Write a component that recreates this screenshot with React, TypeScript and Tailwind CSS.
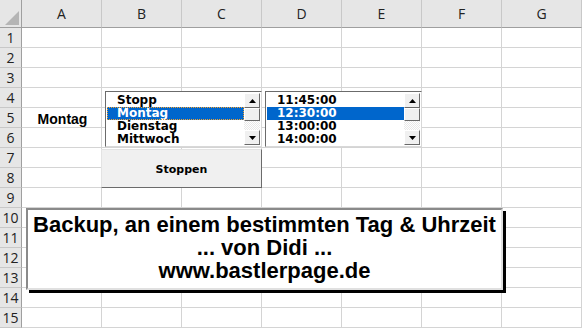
const cols = ["A", "B", "C", "D", "E", "F", "G"];
const rows = Array.from({ length: 15 }, (_, i) => i + 1);

const ScrollBar = () => (
  <div className="flex flex-col w-[16px] h-full bg-[repeating-conic-gradient(#e8e8e8_0%_25%,#ffffff_0%_50%)] bg-[length:2px_2px]">
    <div className="h-[15px] bg-[#f0f0f0] border border-t-white border-l-white border-r-[#696969] border-b-[#696969] flex items-center justify-center">
      <svg width="7" height="4" viewBox="0 0 7 4"><path d="M3.5 0L7 4H0z" fill="#000" /></svg>
    </div>
    <div className="h-[13px] bg-[#f0f0f0] border border-t-white border-l-white border-r-[#696969] border-b-[#696969]" />
    <div className="flex-1" />
    <div className="h-[15px] bg-[#f0f0f0] border border-t-white border-l-white border-r-[#696969] border-b-[#696969] flex items-center justify-center">
      <svg width="7" height="4" viewBox="0 0 7 4"><path d="M0 0H7L3.5 4z" fill="#000" /></svg>
    </div>
  </div>
);

const ListBox = ({ items, sel, focus, className }: { items: string[]; sel: number; focus?: boolean; className: string }) => (
  <div className={`absolute h-[56px] bg-white border border-t-[#6b6b6b] border-l-[#6b6b6b] border-r-[#d8d8d8] border-b-[#d8d8d8] flex p-px ${className}`}>
    <div className="flex-1 flex flex-col pt-[1px]">
      {items.map((t, i) => (
        <div
          key={t}
          className={`h-[13px] leading-[13px] pl-[10px] text-[12px] font-bold ${
            i === sel ? "bg-[#0066cc] text-white" : "text-black"
          } ${i === sel && focus ? "outline outline-1 outline-dotted outline-offset-[-1px] outline-[#f0a030]" : ""}`}
        >
          {t}
        </div>
      ))}
    </div>
    <ScrollBar />
  </div>
);

export default function App() {
  return (
    <div className="relative w-[583px] h-[331px] bg-white overflow-hidden font-['Liberation_Sans',sans-serif] text-[13px]">
      <div className="grid grid-cols-[22px_repeat(7,80px)] grid-rows-[28px_repeat(15,20px)]">
        <div className="bg-[#e6e6e6] border-r border-b border-[#9f9f9f] relative">
          <svg className="absolute right-[2px] bottom-[2px]" width="14" height="14" viewBox="0 0 14 14">
            <path d="M14 0V14H0z" fill="#b5b5b5" />
          </svg>
        </div>
        {cols.map((c) => (
          <div key={c} className="bg-[#e6e6e6] border-r border-[#c8c8c8] border-b border-b-[#9f9f9f] flex items-end justify-center pb-[3px] text-[14px] text-[#222] font-['Open_Sans',sans-serif]">
            {c}
          </div>
        ))}
        {rows.map((r) => (
          <>
            <div key={`h${r}`} className="bg-[#e6e6e6] border-r border-r-[#9f9f9f] border-b border-b-[#c8c8c8] flex items-center justify-center text-[14px] text-[#222] font-['Open_Sans',sans-serif]">
              {r}
            </div>
            {cols.map((c) => (
              <div key={`${c}${r}`} className="border-r border-b border-[#d4d4d4] flex items-center justify-center pt-[3px] pl-[2px] text-[14px] font-bold text-black font-['Liberation_Sans',sans-serif]">
                {c === "A" && r === 5 ? "Montag" : ""}
              </div>
            ))}
          </>
        ))}
      </div>

      <div className="font-['DejaVu_Sans',sans-serif]">
        <ListBox className="left-[105px] top-[91px] w-[157px]" items={["Stopp", "Montag", "Dienstag", "Mittwoch"]} sel={1} focus />
        <ListBox className="left-[265px] top-[91px] w-[157px]" items={["11:45:00", "12:30:00", "13:00:00", "14:00:00"]} sel={1} />

        <button className="absolute left-[101px] top-[149px] w-[161px] h-[39px] pt-[3px] bg-[#f0f0f0] border border-t-[#e3e3e3] border-l-[#e3e3e3] border-r-[#6b6b6b] border-b-[#6b6b6b] text-[11px] font-bold text-black">
          Stoppen
        </button>

        <div className="absolute left-[26px] top-[208px] w-[477px] h-[82px] bg-white border-2 border-t-[#8a8a8a] border-l-[#8a8a8a] border-r-[#e0e0e0] border-b-[#e0e0e0] shadow-[3px_3px_0_#000] flex flex-col items-center pt-[3px] whitespace-nowrap text-[22px] leading-[23px] font-bold text-black font-['Liberation_Sans',sans-serif]">
          <div>Backup, an einem bestimmten Tag &amp; Uhrzeit</div>
          <div>... von Didi ...</div>
          <div>www.bastlerpage.de</div>
        </div>
      </div>
    </div>
  );
}
